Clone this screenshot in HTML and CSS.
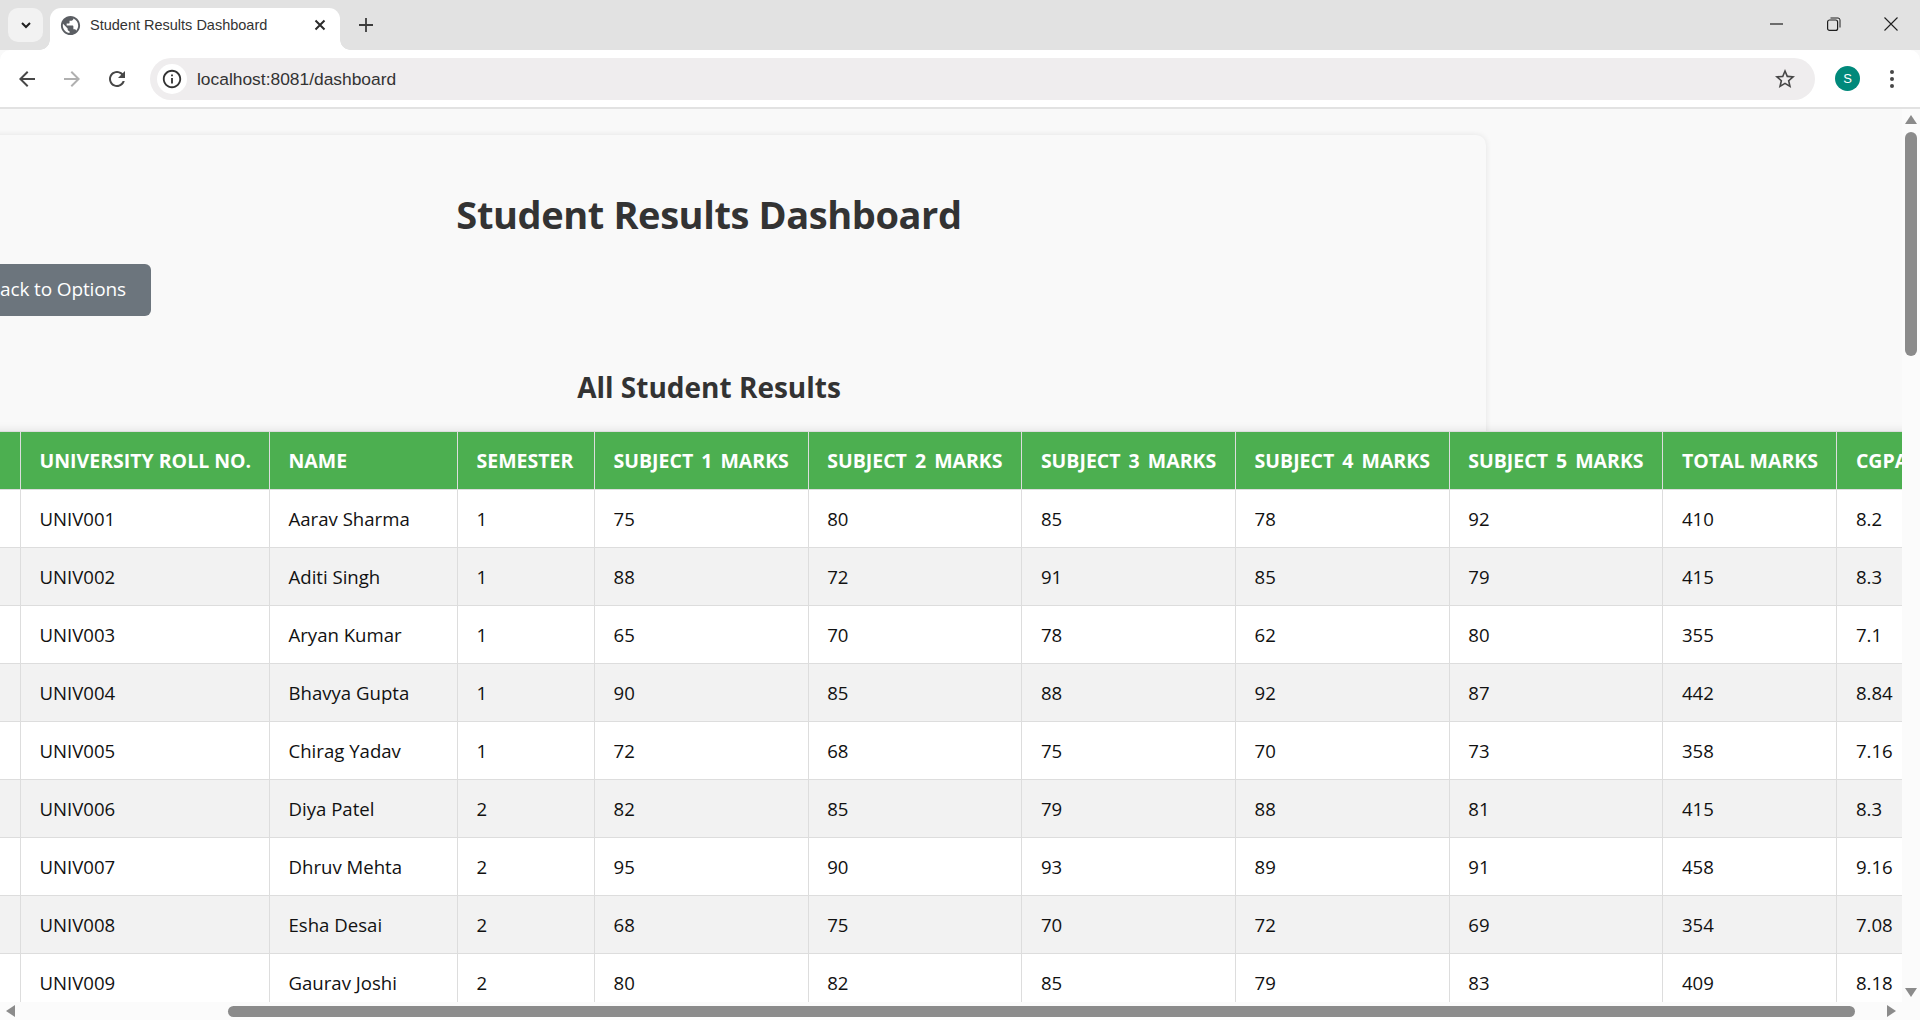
FILE: index.html
```html
<!DOCTYPE html>
<html lang="en">
<head>
    <meta charset="UTF-8">
    <title>Student Results Dashboard</title>
    <link rel="stylesheet" href="styles.css">
</head>
<body>
<div class="browser">
    <div class="tabstrip">
        <div class="tab-menu">
            <svg width="12" height="12" viewBox="0 0 12 12"><path d="M2 4l4 4 4-4" fill="none" stroke="#1f1f1f" stroke-width="2"/></svg>
        </div>
        <div class="tab">
            <svg class="favicon" width="23" height="23" viewBox="0 0 24 24"><path fill="#5b5e63" d="M12 2C6.48 2 2 6.48 2 12s4.48 10 10 10 10-4.48 10-10S17.52 2 12 2zm-1 17.93c-3.95-.49-7-3.85-7-7.93 0-.62.08-1.21.21-1.79L9 15v1c0 1.1.9 2 2 2v1.93zm6.9-2.54c-.26-.81-1-1.39-1.9-1.39h-1v-3c0-.55-.45-1-1-1H8v-2h2c.55 0 1-.45 1-1V7h2c1.1 0 2-.9 2-2v-.41c2.93 1.19 5 4.06 5 7.41 0 2.08-.8 3.97-2.1 5.39z"/></svg>
            <span class="tab-title">Student Results Dashboard</span>
            <svg class="tab-close" width="12" height="12" viewBox="0 0 12 12"><path d="M1.5 1.5l9 9M10.5 1.5l-9 9" stroke="#2b2b2b" stroke-width="2"/></svg>
        </div>
        <svg class="new-tab" width="14" height="14" viewBox="0 0 14 14"><path d="M7 0v14M0 7h14" stroke="#3c3c3c" stroke-width="1.8"/></svg>
        <div class="win-controls">
            <svg width="14" height="14" viewBox="0 0 14 14"><path d="M0 7h13" stroke="#1f1f1f" stroke-width="1.2"/></svg>
            <svg width="14" height="14" viewBox="0 0 14 14"><rect x=".6" y="3" width="10" height="10.4" rx="2" fill="none" stroke="#1f1f1f" stroke-width="1.2"/><path d="M3.5 1h7.5a2 2 0 0 1 2 2v7.5" fill="none" stroke="#1f1f1f" stroke-width="1"/></svg>
            <svg width="14" height="14" viewBox="0 0 14 14"><path d="M.5.5l13 13M13.5.5l-13 13" stroke="#1f1f1f" stroke-width="1.1"/></svg>
        </div>
    </div>
    <div class="toolbar">
        <div class="nav-buttons">
            <svg width="24" height="24" viewBox="0 0 24 24"><path fill="#474747" d="M20 11H7.83l5.59-5.59L12 4l-8 8 8 8 1.41-1.41L7.83 13H20v-2z"/></svg>
            <svg width="24" height="24" viewBox="0 0 24 24"><path fill="#b0b0b0" d="M4 11h12.17l-5.59-5.59L12 4l8 8-8 8-1.41-1.41L16.17 13H4v-2z"/></svg>
            <svg width="24" height="24" viewBox="0 0 24 24"><path fill="#474747" d="M17.65 6.35C16.2 4.9 14.21 4 12 4c-4.42 0-7.99 3.58-7.99 8s3.57 8 7.99 8c3.73 0 6.84-2.55 7.73-6h-2.08c-.82 2.33-3.04 4-5.65 4-3.31 0-6-2.69-6-6s2.69-6 6-6c1.66 0 3.14.69 4.22 1.78L13 11h7V4l-2.35 2.35z"/></svg>
        </div>
        <div class="omnibox">
            <div class="site-info">
                <svg width="22" height="22" viewBox="0 0 24 24"><path fill="#333" d="M11 7h2v2h-2zm0 4h2v6h-2zm1-9C6.48 2 2 6.48 2 12s4.48 10 10 10 10-4.48 10-10S17.52 2 12 2zm0 18c-4.41 0-8-3.59-8-8s3.59-8 8-8 8 3.59 8 8-3.59 8-8 8z"/></svg>
            </div>
            <span class="url">localhost:8081/dashboard</span>
            <svg class="star" width="24" height="24" viewBox="0 0 24 24"><path fill="#474747" d="M22 9.24l-7.19-.62L12 2 9.19 8.63 2 9.24l5.46 4.73L5.82 21 12 17.27 18.18 21l-1.63-7.03L22 9.24zM12 15.4l-3.76 2.27 1-4.28-3.32-2.88 4.38-.38L12 6.1l1.71 4.04 4.38.38-3.32 2.88 1 4.28L12 15.4z"/></svg>
        </div>
        <div class="avatar">S</div>
        <svg class="kebab" width="6" height="22" viewBox="0 0 6 22"><circle cx="3" cy="4" r="2" fill="#474747"/><circle cx="3" cy="11" r="2" fill="#474747"/><circle cx="3" cy="18" r="2" fill="#474747"/></svg>
    </div>

    <div class="viewport">
        <div class="viewport-top">
            <div class="page">
                <div class="card">
                    <h1>Student Results Dashboard</h1>
                    <a class="back-btn">Back to Options</a>
                    <h2>All Student Results</h2>
                    <table class="results">
                        <colgroup>
                            <col class="c-id"><col class="c-roll"><col class="c-name"><col class="c-sem">
                            <col class="c-sub"><col class="c-sub"><col class="c-sub"><col class="c-sub"><col class="c-sub">
                            <col class="c-total"><col class="c-cgpa">
                        </colgroup>
                        <thead>
                            <tr><th></th><th>University Roll No.</th><th>Name</th><th>Semester</th><th class="th-sub">Subject 1 Marks</th><th class="th-sub">Subject 2 Marks</th><th class="th-sub">Subject 3 Marks</th><th class="th-sub">Subject 4 Marks</th><th class="th-sub">Subject 5 Marks</th><th>Total Marks</th><th>CGPA</th></tr>
                        </thead>
                        <tbody>
                            <tr><td></td><td>UNIV001</td><td>Aarav Sharma</td><td>1</td><td>75</td><td>80</td><td>85</td><td>78</td><td>92</td><td>410</td><td>8.2</td></tr>
                            <tr><td></td><td>UNIV002</td><td>Aditi Singh</td><td>1</td><td>88</td><td>72</td><td>91</td><td>85</td><td>79</td><td>415</td><td>8.3</td></tr>
                            <tr><td></td><td>UNIV003</td><td>Aryan Kumar</td><td>1</td><td>65</td><td>70</td><td>78</td><td>62</td><td>80</td><td>355</td><td>7.1</td></tr>
                            <tr><td></td><td>UNIV004</td><td>Bhavya Gupta</td><td>1</td><td>90</td><td>85</td><td>88</td><td>92</td><td>87</td><td>442</td><td>8.84</td></tr>
                            <tr><td></td><td>UNIV005</td><td>Chirag Yadav</td><td>1</td><td>72</td><td>68</td><td>75</td><td>70</td><td>73</td><td>358</td><td>7.16</td></tr>
                            <tr><td></td><td>UNIV006</td><td>Diya Patel</td><td>2</td><td>82</td><td>85</td><td>79</td><td>88</td><td>81</td><td>415</td><td>8.3</td></tr>
                            <tr><td></td><td>UNIV007</td><td>Dhruv Mehta</td><td>2</td><td>95</td><td>90</td><td>93</td><td>89</td><td>91</td><td>458</td><td>9.16</td></tr>
                            <tr><td></td><td>UNIV008</td><td>Esha Desai</td><td>2</td><td>68</td><td>75</td><td>70</td><td>72</td><td>69</td><td>354</td><td>7.08</td></tr>
                            <tr><td></td><td>UNIV009</td><td>Gaurav Joshi</td><td>2</td><td>80</td><td>82</td><td>85</td><td>79</td><td>83</td><td>409</td><td>8.18</td></tr>
                        </tbody>
                    </table>
                </div>
            </div>
            <div class="vscroll">
                <div class="arrow-up"></div>
                <div class="vthumb"></div>
                <div class="arrow-down"></div>
            </div>
        </div>
        <div class="hscroll">
            <div class="arrow-left"></div>
            <div class="hthumb"></div>
            <div class="arrow-right"></div>
        </div>
    </div>
</div>
</body>
</html>
```

FILE: styles.css
```css
* {
    box-sizing: border-box;
}
html, body {
    margin: 0;
    height: 1020px;
    overflow: hidden;
}
body {
    font-family: "Open Sans", "Noto Sans", sans-serif;
    background: #f9f9f9;
}
.browser {
    display: flex;
    flex-direction: column;
    height: 1020px;
}

/* tab strip */
.tabstrip {
    display: flex;
    align-items: flex-end;
    height: 50px;
    background: #e2e2e2;
    flex: none;
}
.tab-menu {
    display: flex;
    align-items: center;
    justify-content: center;
    width: 35px;
    height: 34px;
    margin: 0 7px 8px 8px;
    background: #f2f2f2;
    border-radius: 10px;
}
.tab {
    position: relative;
    display: flex;
    align-items: center;
    width: 290px;
    height: 42px;
    padding: 0 14px 8px 9px;
    background: #fff;
    border-radius: 11px 11px 0 0;
}
.tab::before, .tab::after {
    content: "";
    position: absolute;
    bottom: 0;
    width: 10px;
    height: 10px;
    background: radial-gradient(circle at 0 0, #e2e2e2 9.5px, #fff 10px);
}
.tab::before {
    left: -10px;
}
.tab::after {
    right: -10px;
    background: radial-gradient(circle at 100% 0, #e2e2e2 9.5px, #fff 10px);
}
.favicon {
    flex: none;
}
.tab-title {
    flex: 1;
    margin-left: 8px;
    font-family: "Liberation Sans", sans-serif;
    font-size: 14.5px;
    color: #333;
    white-space: nowrap;
}
.new-tab {
    margin: 0 0 18px 19px;
}
.win-controls {
    display: flex;
    gap: 43px;
    margin: 0 22px 19px auto;
}

/* toolbar */
.toolbar {
    display: flex;
    align-items: center;
    flex: none;
    height: 59px;
    background: #fff;
    border-bottom: 2px solid #e2e2e2;
    border-radius: 10px 10px 0 0;
}
.nav-buttons {
    display: flex;
    gap: 21px;
    width: 150px;
    padding-left: 15px;
}
.omnibox {
    display: flex;
    align-items: center;
    width: 1665px;
    height: 42px;
    padding: 0 18px 0 7px;
    background: #efedee;
    border-radius: 21px;
}
.site-info {
    display: flex;
    align-items: center;
    justify-content: center;
    width: 30px;
    height: 30px;
    background: #fff;
    border-radius: 50%;
}
.url {
    flex: 1;
    margin-left: 10px;
    padding-top: 2px;
    font-family: "Liberation Sans", sans-serif;
    font-size: 17.4px;
    color: #333;
}
.avatar {
    display: flex;
    align-items: center;
    justify-content: center;
    width: 25px;
    height: 25px;
    margin-left: 20px;
    background: #00897b;
    border-radius: 50%;
    color: #fff;
    font-family: "Liberation Sans", sans-serif;
    font-size: 13px;
}
.kebab {
    margin-left: 29px;
}

/* page area */
.viewport {
    flex: 1;
    display: flex;
    flex-direction: column;
    min-height: 0;
}
.viewport-top {
    flex: 1;
    display: flex;
    min-height: 0;
}
.page {
    flex: 1;
    min-width: 0;
    overflow: hidden;
    padding-top: 26px;
    background: #f9f9f9;
}
.card {
    width: 1554px;
    margin-left: -68px;
    padding: 51px 31px 31px;
    background: #f9f9f9;
    border-radius: 10px;
    box-shadow: 0 0 6px rgba(0, 0, 0, .09);
}
h1 {
    margin: 0;
    font-size: 38px;
    letter-spacing: -.4px;
    line-height: 56px;
    font-weight: 700;
    color: #333;
    text-align: center;
}
.back-btn {
    display: inline-block;
    height: 52px;
    margin-top: 22px;
    padding: 0 25px;
    background: #6c757d;
    border-radius: 6px;
    color: #fff;
    font-size: 19px;
    letter-spacing: -.15px;
    line-height: 50px;
}
h2 {
    margin: 49px 0 0;
    font-size: 28px;
    line-height: 44px;
    font-weight: 700;
    color: #333;
    text-align: center;
}
.results {
    table-layout: fixed;
    width: 1975px;
    margin-top: 22px;
    border-collapse: collapse;
    background: #fff;
    box-shadow: 0 0 10px rgba(0, 0, 0, .1);
    font-size: 18.6px;
    color: #111;
}
.c-id { width: 57px; }
.c-roll { width: 249px; }
.c-name { width: 188px; }
.c-sem { width: 137px; }
.c-sub { width: 213.7px; }
.c-total { width: 174px; }
.c-cgpa { width: 117px; }
.results th, .results td {
    height: 58px;
    padding: 0 18px 0 18.5px;
    border: 1px solid #ddd;
    text-align: left;
    white-space: nowrap;
}
.results th {
    background: #4caf50;
    color: #fff;
    font-size: 19.5px;
    font-weight: 700;
    text-transform: uppercase;
}
.results .th-sub {
    word-spacing: 3px;
}
.results tbody tr:nth-child(even) {
    background: #f2f2f2;
}

/* scrollbars */
.vscroll {
    position: relative;
    flex: none;
    width: 18px;
    background: #fbfbfb;
}
.vthumb {
    position: absolute;
    top: 23px;
    left: 3px;
    width: 12px;
    height: 224px;
    background: #8b8b8b;
    border-radius: 6px;
}
.arrow-up, .arrow-down, .arrow-left, .arrow-right {
    position: absolute;
    width: 0;
    height: 0;
    border-style: solid;
    border-color: transparent;
}
.arrow-up {
    top: 6px;
    left: 3px;
    border-width: 0 6px 9px;
    border-bottom-color: #8b8b8b;
}
.arrow-down {
    bottom: 5px;
    left: 3px;
    border-width: 9px 6px 0;
    border-top-color: #8b8b8b;
}
.hscroll {
    position: relative;
    flex: none;
    height: 18px;
    background: #fbfbfb;
}
.hthumb {
    position: absolute;
    top: 4px;
    left: 228px;
    width: 1627px;
    height: 11px;
    background: #8b8b8b;
    border-radius: 6px;
}
.arrow-left {
    top: 3px;
    left: 6px;
    border-width: 6px 9px 6px 0;
    border-right-color: #8b8b8b;
}
.arrow-right {
    top: 3px;
    left: 1887px;
    border-width: 6px 0 6px 9px;
    border-left-color: #8b8b8b;
}
```
